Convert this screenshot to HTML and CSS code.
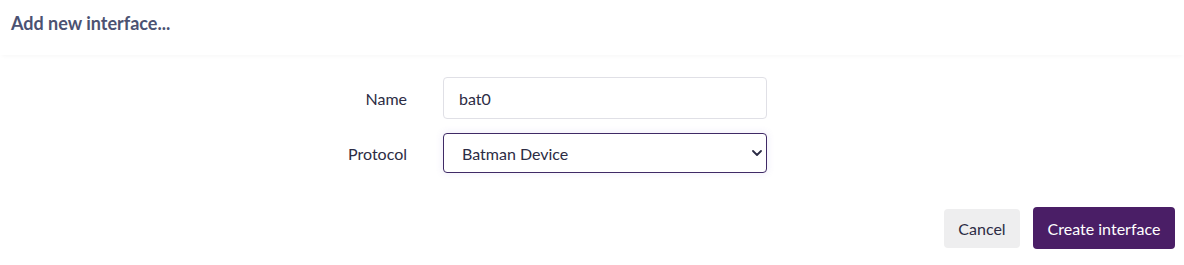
FILE: index.html
```html
<!DOCTYPE html>
<html>
<head>
<meta charset="utf-8">
<link rel="stylesheet" href="styles.css">
</head>
<body>
<div class="modal">
  <div class="header">
    <h4 class="title">Add new interface...</h4>
  </div>
  <div class="body">
    <div class="form">
      <label class="label" for="name">Name</label>
      <input class="input" id="name" type="text" value="bat0">
      <label class="label" for="proto">Protocol</label>
      <div class="select-wrap">
        <select class="select" id="proto">
          <option>Batman Device</option>
        </select>
        <svg class="chev" viewBox="0 0 10 6" width="10" height="6"><path d="M1 1 L5 5 L9 1" fill="none" stroke="#2b2b45" stroke-width="1.8" stroke-linecap="round" stroke-linejoin="round"/></svg>
      </div>
    </div>
    <div class="actions">
      <button class="btn btn-cancel">Cancel</button>
      <button class="btn btn-primary">Create interface</button>
    </div>
  </div>
</div>
</body>
</html>
```

FILE: styles.css
```css
* { box-sizing: border-box; }
html, body {
  margin: 0;
  padding: 0;
  background: #fff;
  font-family: Lato, "Noto Sans", sans-serif;
}
.modal {
  width: 1184px;
  height: 265px;
}
.header {
  height: 55px;
  padding: 11px 11px 0;
  box-shadow: 0 3px 4px -2px rgba(0, 0, 0, 0.04);
}
.title {
  margin: 0;
  font-size: 18px;
  font-weight: 700;
  color: #4b5272;
  line-height: 24px;
}
.body {
  padding: 22px 9px 0;
}
.form {
  display: grid;
  grid-template-columns: 398px 324px;
  column-gap: 36px;
  row-gap: 14px;
  align-items: center;
}
.label {
  text-align: right;
  font-size: 16px;
  color: #2c2c44;
}
.input {
  height: 42px;
  width: 324px;
  border: 1px solid #e0e0e6;
  border-radius: 4px;
  padding: 0 15px;
  font-family: inherit;
  font-size: 16px;
  color: #2c2c44;
  outline: none;
}
.select-wrap {
  position: relative;
  width: 324px;
  height: 40px;
}
.select {
  appearance: none;
  -webkit-appearance: none;
  width: 100%;
  height: 100%;
  border: 1px solid #3f2a66;
  border-radius: 4px;
  padding: 0 18px;
  background: #fff;
  font-family: inherit;
  font-size: 16px;
  color: #2c2c44;
  box-shadow: 0 0 6px 2px rgba(110, 90, 200, 0.08);
  outline: none;
}
.chev {
  position: absolute;
  right: 5px;
  top: 17px;
  pointer-events: none;
}
.actions {
  display: flex;
  justify-content: flex-end;
  align-items: center;
  gap: 13px;
  margin-top: 34px;
}
.btn {
  border: none;
  border-radius: 4px;
  font-family: inherit;
  font-size: 16px;
  cursor: pointer;
}
.btn-cancel {
  width: 76px;
  height: 39px;
  background: #eeeeef;
  color: #2c2c44;
}
.btn-primary {
  width: 142px;
  height: 42px;
  background: #4a1e66;
  color: #fff;
}
```
